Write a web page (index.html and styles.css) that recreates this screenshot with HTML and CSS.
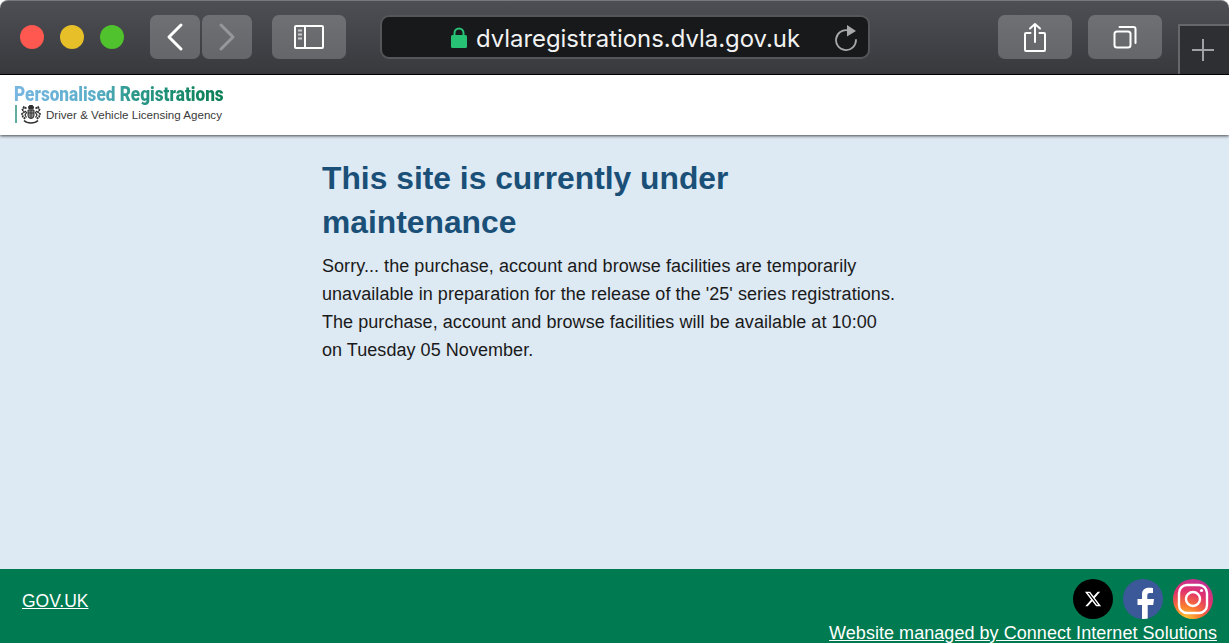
FILE: index.html
```html
<!DOCTYPE html>
<html lang="en">
<head>
    <meta charset="UTF-8">
    <meta name="viewport" content="width=device-width, initial-scale=1.0">
    <title>Personalised Registrations</title>
    <link rel="stylesheet" href="styles.css">
</head>
<body>
    <!-- browser chrome -->
    <div class="toolbar">
        <div class="lights">
            <span class="light red"></span>
            <span class="light yellow"></span>
            <span class="light green"></span>
        </div>
        <div class="nav-pair">
            <div class="tool-btn nav-btn">
                <svg width="24" height="30" viewBox="0 0 24 30" fill="none" stroke="#fff" stroke-width="3" stroke-linecap="round" stroke-linejoin="round"><path d="M18 3 6 15l12 12"/></svg>
            </div>
            <div class="tool-btn nav-btn">
                <svg width="24" height="30" viewBox="0 0 24 30" fill="none" stroke="#96979a" stroke-width="3" stroke-linecap="round" stroke-linejoin="round"><path d="M6 3l12 12L6 27"/></svg>
            </div>
        </div>
        <div class="tool-btn wide sidebar-btn">
            <svg width="32" height="26" viewBox="0 0 32 26" fill="none" stroke="#fff" stroke-width="2"><rect x="2" y="2" width="28" height="22" rx="1"/><path d="M12 2v22"/><path d="M5 6.500h4M5 10.500h4M5 14.500h4" stroke="#c8c8ca"/></svg>
        </div>
        <div class="url-bar">
            <svg class="lock" width="16" height="21" viewBox="0 0 16 21"><path d="M3.500 9V6a4.500 4.500 0 0 1 9 0v3" fill="none" stroke="#27c274" stroke-width="2"/><rect y="8" width="16" height="13" rx="1.500" fill="#27c274"/></svg>
            <span class="url-text">dvlaregistrations.dvla.gov.uk</span>
            <svg class="reload" width="24" height="27" viewBox="0 0 24 27" fill="none"><path d="M14 6.300A10 10 0 1 0 22 16" stroke="#a9a9ab" stroke-width="1.800" stroke-linecap="round"/><path d="M13 1l9 6-9 5.500z" fill="#a9a9ab"/></svg>
        </div>
        <div class="tool-btn wide share-btn">
            <svg width="24" height="30" viewBox="0 0 24 30" fill="none" stroke="#fff" stroke-width="2" stroke-linecap="round" stroke-linejoin="round"><path d="M7.500 11H3a1 1 0 0 0-1 1v16a1 1 0 0 0 1 1h18a1 1 0 0 0 1-1V12a1 1 0 0 0-1-1h-4.500"/><path d="M12 20V2M7 6.500 12 2l5 4.500"/></svg>
        </div>
        <div class="tool-btn wide tabs-btn">
            <svg width="24" height="24" viewBox="0 0 24 24" fill="none" stroke="#fff" stroke-width="2" stroke-linecap="round" stroke-linejoin="round"><rect x="1.500" y="6.500" width="16" height="16" rx="2.500"/><path d="M6.500 2h14a2 2 0 0 1 2 2v14"/></svg>
        </div>
        <div class="new-tab">
            <svg width="22" height="22" viewBox="0 0 22 22" stroke="#a1a1a3" stroke-width="2"><path d="M11 0v22M0 11h22"/></svg>
        </div>
    </div>

    <header class="site-header">
        <div class="logo">
            <div class="logo-title">Personalised Registrations</div>
            <div class="logo-agency">
                <span class="logo-rule"></span>
                <svg class="crest" width="20" height="19" viewBox="0 0 20 19" fill="none" stroke="#2e2e2e" stroke-width="1">
                    <path d="M7.500 2 8.500.5h3l1 1.500-.5 2H8z" fill="#2e2e2e"/>
                    <path d="M7 5h6v5.500a3 3 0 0 1-6 0z" fill="#8a8a8a"/>
                    <path d="M7 8h6M10 5v8" stroke-width=".8"/>
                    <path d="M5.500 3.500 3 2 1.500 4.500 3 7 1 9l1 3 2.500 2M14.500 3.500 17 2l1.500 2.500L17 7l2 2-1 3-2.500 2" stroke-width="1.800" stroke-dasharray="2 .6"/>
                    <path d="M4 6l1.500 1.500L4 10l1.500 2.500M16 6l-1.500 1.500L16 10l-1.500 2.500" stroke-width="1.200"/>
                    <path d="M3 15.500c2 2 4.500 2.500 7 2.500s5-.5 7-2.500" stroke-width="1.500"/>
                </svg>
                <span>Driver &amp; Vehicle Licensing Agency</span>
            </div>
        </div>
    </header>

    <main class="content">
        <div class="message">
            <h1>This site is currently under maintenance</h1>
            <p>Sorry... the purchase, account and browse facilities are temporarily unavailable in preparation for the release of the '25' series registrations.</p>
            <p>The purchase, account and browse facilities will be available at 10:00 on Tuesday 05 November.</p>
        </div>
    </main>

    <footer class="site-footer">
        <div class="footer-top">
            <a class="gov-link" href="#">GOV.UK</a>
            <div class="social">
                <a class="social-icon x" href="#" aria-label="X">
                    <svg width="18" height="18" viewBox="0 0 24 24"><path fill="#fff" d="M18.244 2.250h3.308l-7.227 8.260 8.502 11.240H16.170l-5.214-6.817L4.990 21.750H1.680l7.730-8.835L1.254 2.250H8.080l4.713 6.231zm-1.161 17.520h1.833L7.084 4.126H5.117z"/></svg>
                </a>
                <a class="social-icon fb" href="#" aria-label="Facebook">
                    <svg width="40" height="40" viewBox="0 0 40 40"><path fill="#fff" d="M19 40V26h-4.500v-6H19v-4.500c0-4.500 2.700-6.800 6.700-6.800 1.900 0 3.500.1 4.300.3v5h-3c-2.200 0-2.700 1-2.700 2.600V20H31l-.8 6h-5.500v14z"/></svg>
                </a>
                <a class="social-icon ig" href="#" aria-label="Instagram">
                    <svg width="32" height="32" viewBox="0 0 32 32" fill="none" stroke="#fff" stroke-width="2.400"><rect x="2" y="2" width="28" height="28" rx="8"/><circle cx="16" cy="16" r="7"/><circle cx="24.500" cy="7.500" r="1.600" fill="#fff" stroke="none"/></svg>
                </a>
            </div>
        </div>
        <div class="footer-bottom">
            <a href="#">Website managed by Connect Internet Solutions</a>
        </div>
    </footer>
</body>
</html>
```

FILE: styles.css
```css
body {
    margin: 0;
    display: flex;
    flex-direction: column;
    height: 643px;
    overflow: hidden;
    background-color: #fff;
    font-family: "Liberation Sans", Arial, sans-serif;
    color: #1a1a1a;
}

/* toolbar */
.toolbar {
    flex: none;
    display: flex;
    align-items: center;
    height: 75px;
    box-sizing: border-box;
    padding: 0 0 1px 20px;
    background: linear-gradient(#4e4f54, #38393d);
    border-top: 1px solid #77787b;
    border-bottom: 1px solid #000;
    border-radius: 8px 8px 0 0;
}
.lights {
    display: flex;
    gap: 16px;
    margin-right: 26px;
}
.light {
    width: 24px;
    height: 24px;
    border-radius: 50%;
}
.red { background-color: #fe5850; }
.yellow { background-color: #e6bf29; }
.green { background-color: #4fc22d; }
.nav-pair {
    display: flex;
    gap: 2px;
    margin-right: 20px;
}
.tool-btn {
    display: flex;
    align-items: center;
    justify-content: center;
    height: 44px;
    background: linear-gradient(#6f7074, #65666a);
    border-radius: 7px;
}
.nav-btn {
    width: 50px;
}
.wide {
    width: 74px;
}
.url-bar {
    position: relative;
    display: flex;
    align-items: center;
    justify-content: center;
    box-sizing: border-box;
    width: 490px;
    height: 44px;
    margin: 0 128px 0 34px;
    padding-left: 1px;
    background-color: #18191b;
    border: 2px solid #55565a;
    border-radius: 9px;
}
.lock {
    margin-right: 9px;
}
.url-text {
    padding-top: 2px;
    font-family: Inter, "Noto Sans", sans-serif;
    font-size: 23.900px;
    color: #f2f2f2;
}
.reload {
    position: absolute;
    right: 10px;
    top: 7px;
}
.share-btn {
    margin-right: 16px;
}
.new-tab {
    align-self: flex-end;
    display: flex;
    align-items: center;
    justify-content: center;
    box-sizing: border-box;
    width: 51px;
    height: 50px;
    margin: 0 0 -1px 16px;
    padding-right: 3px;
    background-color: #2e2f32;
    border-top: 2px solid #66676a;
    border-left: 2px solid #66676a;
}

/* site header */
.site-header {
    flex: none;
    position: relative;
    height: 60px;
    box-sizing: border-box;
    padding: 8px 14px 0;
    background-color: #fff;
    box-shadow: 0 1px 3px rgba(0, 0, 0, 0.7);
}
.logo-title {
    display: block;
    width: max-content;
    font-family: Roboto, "Liberation Sans", sans-serif;
    font-size: 20px;
    font-weight: 900;
    line-height: 23px;
    white-space: nowrap;
    transform: scaleX(0.858);
    transform-origin: left;
    background: linear-gradient(90deg, #78b6e2, #5aaec8 40%, #2f9a8f 55%, #0a7f52);
    -webkit-background-clip: text;
    background-clip: text;
    color: transparent;
}
.logo-agency {
    display: flex;
    align-items: center;
    height: 18px;
    margin-top: -1px;
    font-size: 11.600px;
    color: #3a3a3a;
}
.logo-rule {
    width: 2px;
    height: 18px;
    margin: 0 4px 0 1px;
    background-color: #5fae9f;
}
.crest {
    margin-right: 5px;
}

/* main message */
.content {
    flex: 1;
    padding-top: 21px;
    background-color: #dde9f3;
}
.message {
    width: 585px;
    margin: 0 auto;
}
.message h1 {
    margin: 0 0 8px;
    font-size: 31.800px;
    line-height: 44px;
    color: #1a5078;
}
.message p {
    margin: 0;
    padding-right: 8px;
    font-size: 18px;
    line-height: 28px;
    letter-spacing: 0.050px;
}

/* footer */
.site-footer {
    flex: none;
    height: 74px;
    box-sizing: border-box;
    padding: 10px 12px 0 22px;
    background-color: #007a50;
    font-size: 18px;
}
.site-footer a {
    color: #fff;
}
.footer-top {
    display: flex;
    align-items: center;
    justify-content: space-between;
    padding-right: 4px;
}
.gov-link {
    padding-top: 4px;
    font-size: 17.500px;
}
.social {
    display: flex;
    gap: 10px;
}
.social-icon {
    display: flex;
    align-items: center;
    justify-content: center;
    width: 40px;
    height: 40px;
    overflow: hidden;
    border-radius: 50%;
}
.x { background-color: #000; }
.fb { background-color: #3b5998; }
.ig { background: radial-gradient(circle at 30% 105%, #fdd835 0%, #fb7a30 30%, #e0326e 60%, #b52fa8 100%); }
.footer-bottom {
    margin-top: 4px;
    text-align: right;
    letter-spacing: 0.045px;
}
```
